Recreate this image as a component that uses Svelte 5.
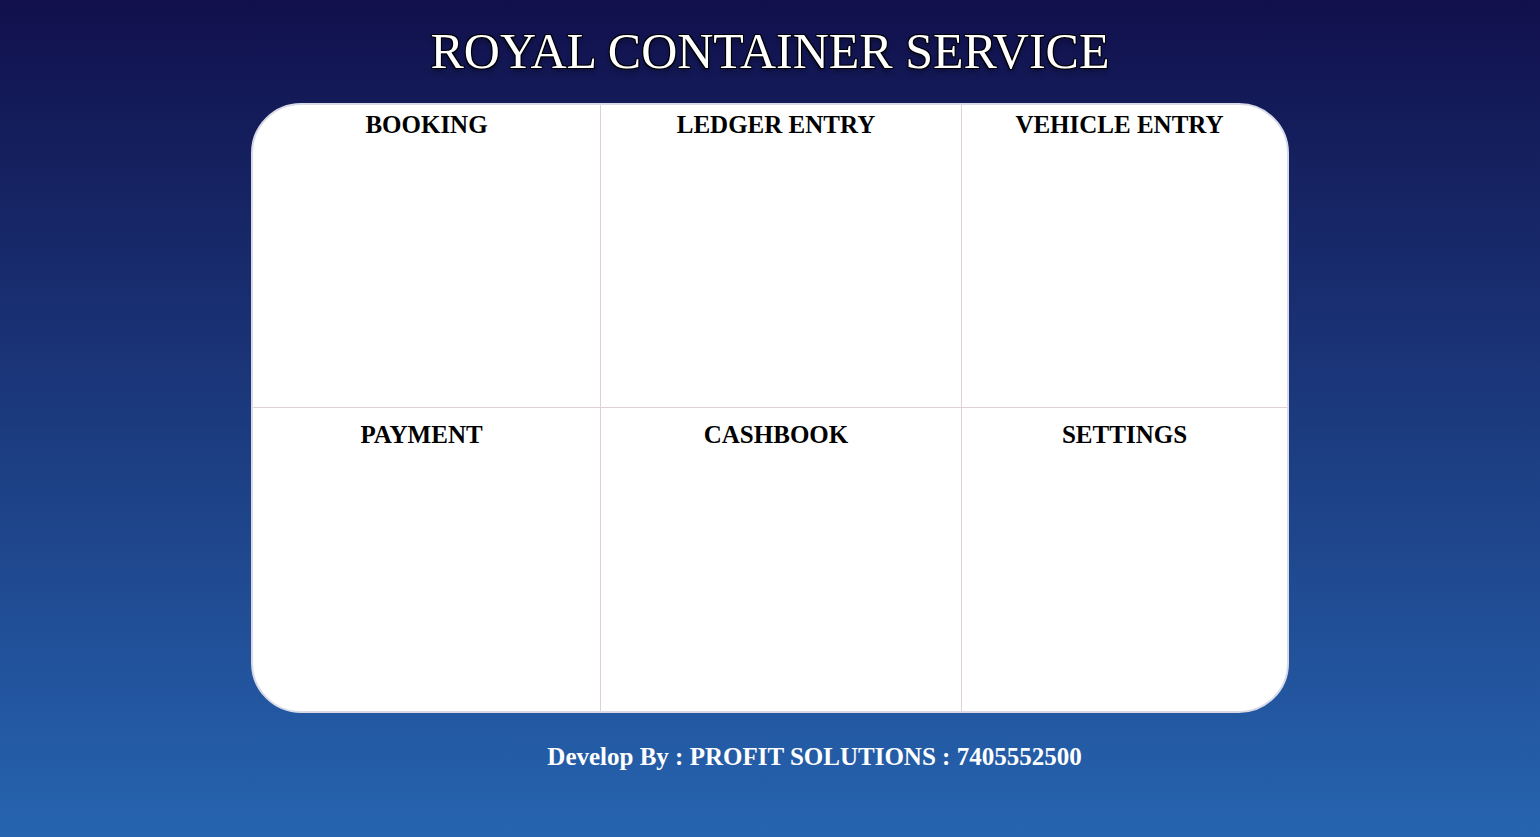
<script>
  const sections = [
    { name: 'BOOKING' },
    { name: 'LEDGER ENTRY', inset: true },
    { name: 'VEHICLE ENTRY', inset: true },
    { name: 'PAYMENT', inset: true },
    { name: 'CASHBOOK', inset: true },
    { name: 'SETTINGS' }
  ];
</script>

<div class="page">
  <h1>ROYAL CONTAINER SERVICE</h1>
  <main class="panel">
    {#each sections as { name, inset }}
      <section class="cell" class:inset><h2>{name}</h2></section>
    {/each}
  </main>
  <footer>Develop By : PROFIT SOLUTIONS : 7405552500</footer>
</div>

<style>
  :global(body) {
    margin: 0;
  }
  .page {
    box-sizing: border-box;
    min-height: 100vh;
    padding-top: 24px;
    font-family: 'Liberation Serif', serif;
    background: linear-gradient(180deg, #11104c, #2664b0);
  }
  h1 {
    margin: 0;
    font-size: 50px;
    line-height: 55px;
    font-weight: 400;
    text-align: center;
    color: #fff;
    text-shadow:
      -1px -1px 0 #000,
      1px -1px 0 #000,
      -1px 1px 0 #000,
      1px 1px 0 #000,
      0 4px 4px rgba(0, 0, 0, 0.4);
  }
  .panel {
    box-sizing: border-box;
    width: calc(100% - 502px);
    margin: 24px auto 0;
    display: grid;
    grid-template-columns: 348fr 361fr 325fr;
    grid-template-rows: minmax(303px, 1fr) minmax(303px, 1fr);
    overflow: hidden;
    border: 2px solid #d8dae8;
    border-radius: 50px;
    background: #fff;
  }
  .cell {
    padding-top: 5px;
    border-right: 1px solid #e0d0d4;
    border-bottom: 1px solid #e0d0d4;
  }
  .cell:nth-child(3n) {
    border-right: 0;
  }
  .cell:nth-child(n + 4) {
    padding-top: 12px;
    border-bottom: 0;
  }
  .inset {
    padding-right: 10px;
  }
  h2 {
    margin: 0;
    font-size: 25px;
    line-height: 30px;
    font-weight: 700;
    text-align: center;
    color: #000;
  }
  footer {
    padding: 29px 0 29px 89px;
    font-size: 25px;
    line-height: 30px;
    font-weight: 700;
    text-align: center;
    color: #fff;
  }
</style>
